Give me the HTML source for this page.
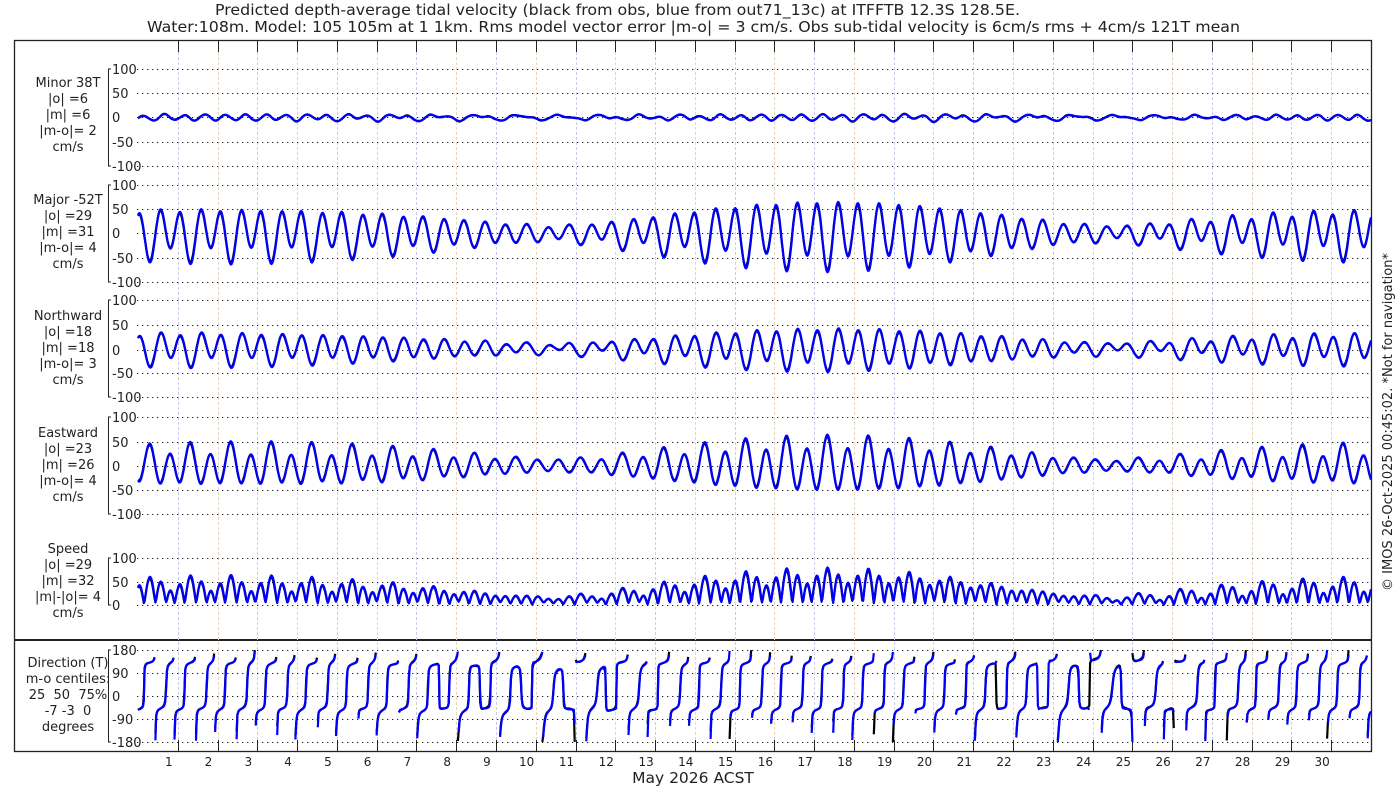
<!DOCTYPE html>
<html><head><meta charset="utf-8">
<style>
html,body{margin:0;padding:0;background:#fff;}
svg{display:block;font-family:"DejaVu Sans","Liberation Sans",sans-serif;}
</style></head>
<body>
<svg id="s" width="1400" height="800" viewBox="0 0 1400 800" xmlns="http://www.w3.org/2000/svg">
<rect width="1400" height="800" fill="#fff"/>
<text x="215" y="15" font-size="15.5" textLength="805" lengthAdjust="spacingAndGlyphs" fill="#222">Predicted depth-average tidal velocity (black from obs, blue from out71_13c) at ITFFTB 12.3S 128.5E.</text>
<text x="147" y="32" font-size="15.5" textLength="1093" lengthAdjust="spacingAndGlyphs" fill="#222">Water:108m. Model: 105 105m at 1 1km. Rms model vector error |m-o| = 3 cm/s. Obs sub-tidal velocity is 6cm/s rms + 4cm/s 121T mean</text>
<text x="693" y="783" font-size="15.5" text-anchor="middle" fill="#222">May 2026 ACST</text>
<text transform="translate(1392,422) rotate(-90)" font-size="13" text-anchor="middle" fill="#222">© IMOS 26-Oct-2025 00:45:02. *Not for navigation*</text>
<g id="g"></g>
</svg>
<script>
(function(){
var g=document.getElementById('g'),h='';
var X0=138,X1=1371,DW=(X1-X0)/31;
function X(t){return X0+t/24*DW;}
h+='<rect x="14.5" y="40.5" width="1357" height="711" fill="none" stroke="#222" stroke-width="1.3"/>';
h+='<line x1="14" y1="640" x2="1371" y2="640" stroke="#222" stroke-width="2"/>';
for(var d=1;d<31;d++){var x=Math.round(X0+d*DW)+0.5;
 h+='<line x1="'+x+'" y1="52" x2="'+x+'" y2="740" stroke="'+(d%2?'#c9cbe8':'#e8d2c0')+'" stroke-width="1" stroke-dasharray="3,2"/>';
 h+='<line x1="'+x+'" y1="40" x2="'+x+'" y2="52" stroke="#222"/>';
 h+='<line x1="'+x+'" y1="740" x2="'+x+'" y2="751" stroke="#222"/>';
}
for(var d=1;d<=30;d++){h+='<text x="'+(X0+d*DW-9).toFixed(1)+'" y="766" font-size="12" text-anchor="middle" fill="#222">'+d+'</text>';}
var P=[
 {ticks:[[100,69],[50,93],[0,117],[-50,142],[-100,166]],lab:['Minor 38T','|o| =6','|m| =6','|m-o|= 2','cm/s'],ly:87},
 {ticks:[[100,185],[50,209],[0,233],[-50,258],[-100,282]],lab:['Major -52T','|o| =29','|m| =31','|m-o|= 4','cm/s'],ly:204},
 {ticks:[[100,300],[50,325],[0,350],[-50,373],[-100,397]],lab:['Northward','|o| =18','|m| =18','|m-o|= 3','cm/s'],ly:320},
 {ticks:[[100,417],[50,442],[0,466],[-50,490],[-100,514]],lab:['Eastward','|o| =23','|m| =26','|m-o|= 4','cm/s'],ly:437},
 {ticks:[[100,558],[50,582],[0,605]],lab:['Speed','|o| =29','|m| =32','|m|-|o|= 4','cm/s'],ly:553},
 {ticks:[[180,650],[90,673],[0,696],[-90,719],[-180,742]],lab:['Direction (T)','m-o centiles:','25  50  75%','-7 -3  0','degrees'],ly:667}
];
P.forEach(function(p){
 var t=p.ticks,top=t[0][1],bot=t[t.length-1][1];
 h+='<path d="M111,'+top+'H108.5V'+bot+'H111" fill="none" stroke="#222"/>';
 t.forEach(function(k){
  h+='<line x1="137" y1="'+k[1]+'.5" x2="1371" y2="'+k[1]+'.5" stroke="#222" stroke-dasharray="1.3,3.7"/>';
  h+='<text x="112" y="'+(k[1]+5)+'" font-size="13" fill="#222">'+k[0]+'</text>';
 });
 p.lab.forEach(function(s,i){h+='<text x="68" y="'+(p.ly+i*16)+'" font-size="13" text-anchor="middle" fill="#222" xml:space="preserve">'+s+'</text>';});
 p.sc=(t[t.length-1][1]-t[0][1])/(t[0][0]-t[t.length-1][0]);p.z=t[0][1]+t[0][0]*p.sc;
});
var PI=Math.PI,wM2=2*PI/12.4206,wS2=2*PI/12,wK1=2*PI/23.9345,wO1=2*PI/25.8193,wN2=2*PI/12.6583;
var pS=(wM2-wS2)*420, pN=(wM2-wN2)*420;
function sig(t,o){
 var maj=33*Math.cos(wM2*t+o)+19*Math.cos(wS2*t+pS+o)+8*Math.cos(wN2*t+pN+o)+9*Math.cos(wK1*t+1+o)+7*Math.cos(wO1*t+2.2+o);
 var min=4*Math.cos(wM2*t-1.5+o)+2*Math.cos(wS2*t+pS-1.5)+2.5*Math.cos(wK1*t+2.5)+2*Math.cos(wO1*t+0.4);
 return [maj,min];
}
var a=-52*PI/180,b=38*PI/180;
function comps(t,o,n){var s=sig(t,o);var mj=s[0]*(n?1.0:1.06),mn=s[1]+(n?Math.sin(t*0.9)*0.8:0);
 var N=mj*Math.cos(a)+mn*Math.cos(b),E=mj*Math.sin(a)+mn*Math.sin(b);
 var dir=Math.atan2(E,N)*180/PI;
 return [mn,mj,N,E,Math.sqrt(N*N+E*E),dir];}
function draw(n,col){
 var paths=['','','','','',''];var prev=null;
 for(var t=0;t<=744;t+=0.5){
  var c=comps(t,n?0.05:0,n),x=X(t).toFixed(1);
  for(var k=0;k<6;k++){var p=P[k],v=c[k];
   if(k==4) v=Math.min(v,100);
   var y=(p.z-v*p.sc).toFixed(1);
   if(k==5 && prev){paths[k]+=(Math.abs(prev[5]-v)>180)?'M':'L';}
   else paths[k]+=(t==0?'M':'L');
   paths[k]+=x+','+y;}
  prev=c;
 }
 paths.forEach(function(d){h+='<path d="'+d+'" fill="none" stroke="'+col+'" stroke-width="2.2" stroke-linejoin="round"/>';});
}
draw(1,'#000');draw(0,'#0000ff');
g.innerHTML=h;
})();
</script>
</body></html>
